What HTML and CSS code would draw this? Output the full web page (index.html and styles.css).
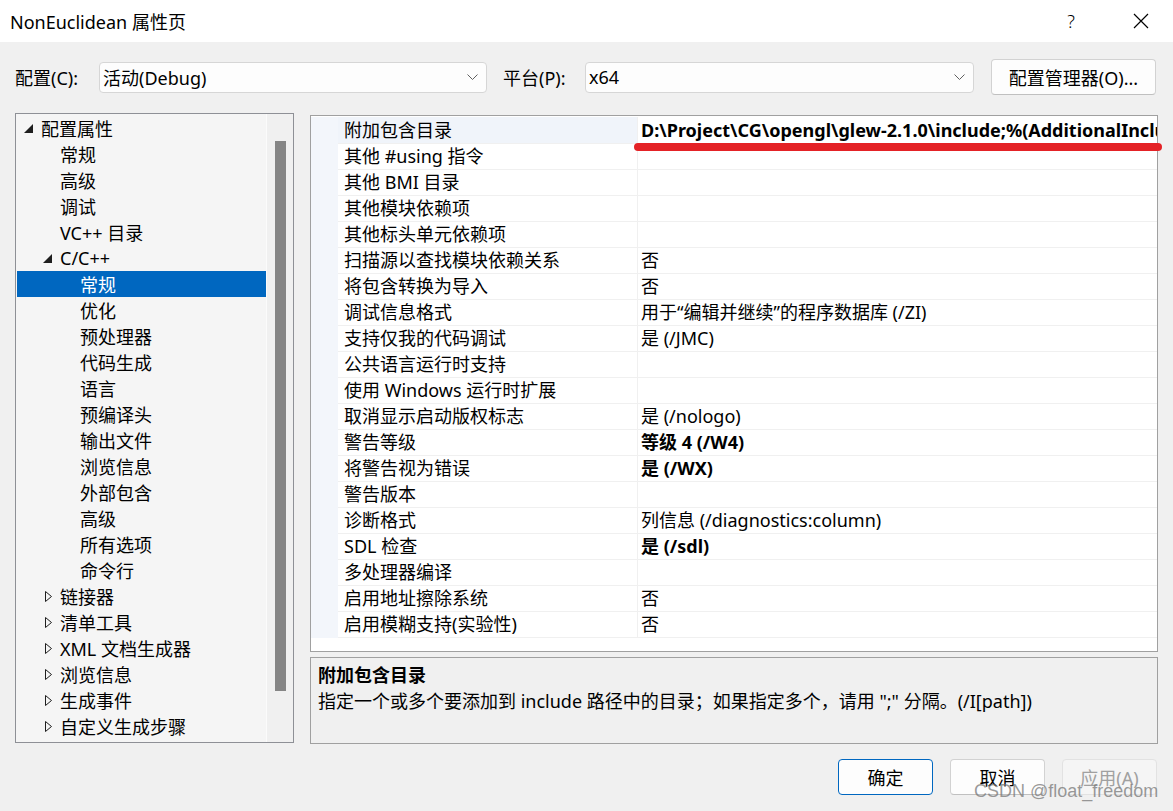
FILE: index.html
```html
<!DOCTYPE html>
<html lang="zh-CN">
<head>
    <meta charset="UTF-8">
    <title>NonEuclidean 属性页</title>
    <link rel="stylesheet" href="styles.css">
</head>
<body>
<div class="dialog">
    <div class="titlebar">
        <span class="title">NonEuclidean 属性页</span>
        <span class="caption-btn help">?</span>
        <span class="caption-btn close">
            <svg width="16" height="16" viewBox="0 0 16 16"><path d="M1 1L15 15M15 1L1 15" stroke="#000" stroke-width="1.2"/></svg>
        </span>
    </div>

    <div class="config-row">
        <label class="cfg-label">配置(C):</label>
        <div class="combo combo-config">
            <span>活动(Debug)</span>
            <svg width="11" height="6" viewBox="0 0 11 6"><path d="M0.5 0.5L5.5 5.5L10.5 0.5" fill="none" stroke="#606060"/></svg>
        </div>
        <label class="cfg-label platform-label">平台(P):</label>
        <div class="combo combo-platform">
            <span>x64</span>
            <svg width="11" height="6" viewBox="0 0 11 6"><path d="M0.5 0.5L5.5 5.5L10.5 0.5" fill="none" stroke="#606060"/></svg>
        </div>
        <button class="btn btn-manager">配置管理器(O)...</button>
    </div>

    <div class="main">
        <div class="tree">
            <ul class="tree-list">
                <li class="lvl1"><span class="twisty"><svg width="9" height="9" viewBox="0 0 9 9"><path d="M9 0V9H0Z" fill="#1e1e1e"/></svg></span>配置属性</li>
                <li class="lvl2"><span class="twisty"></span>常规</li>
                <li class="lvl2"><span class="twisty"></span>高级</li>
                <li class="lvl2"><span class="twisty"></span>调试</li>
                <li class="lvl2"><span class="twisty"></span>VC++ 目录</li>
                <li class="lvl2"><span class="twisty"><svg width="9" height="9" viewBox="0 0 9 9"><path d="M9 0V9H0Z" fill="#1e1e1e"/></svg></span>C/C++</li>
                <li class="lvl3 selected"><span class="twisty"></span>常规</li>
                <li class="lvl3"><span class="twisty"></span>优化</li>
                <li class="lvl3"><span class="twisty"></span>预处理器</li>
                <li class="lvl3"><span class="twisty"></span>代码生成</li>
                <li class="lvl3"><span class="twisty"></span>语言</li>
                <li class="lvl3"><span class="twisty"></span>预编译头</li>
                <li class="lvl3"><span class="twisty"></span>输出文件</li>
                <li class="lvl3"><span class="twisty"></span>浏览信息</li>
                <li class="lvl3"><span class="twisty"></span>外部包含</li>
                <li class="lvl3"><span class="twisty"></span>高级</li>
                <li class="lvl3"><span class="twisty"></span>所有选项</li>
                <li class="lvl3"><span class="twisty"></span>命令行</li>
                <li class="lvl2"><span class="twisty"><svg width="9" height="11" viewBox="0 0 9 11"><path d="M2.5 0.5L8.5 5.5L2.5 10.5Z" fill="none" stroke="#1e1e1e"/></svg></span>链接器</li>
                <li class="lvl2"><span class="twisty"><svg width="9" height="11" viewBox="0 0 9 11"><path d="M2.5 0.5L8.5 5.5L2.5 10.5Z" fill="none" stroke="#1e1e1e"/></svg></span>清单工具</li>
                <li class="lvl2"><span class="twisty"><svg width="9" height="11" viewBox="0 0 9 11"><path d="M2.5 0.5L8.5 5.5L2.5 10.5Z" fill="none" stroke="#1e1e1e"/></svg></span>XML 文档生成器</li>
                <li class="lvl2"><span class="twisty"><svg width="9" height="11" viewBox="0 0 9 11"><path d="M2.5 0.5L8.5 5.5L2.5 10.5Z" fill="none" stroke="#1e1e1e"/></svg></span>浏览信息</li>
                <li class="lvl2"><span class="twisty"><svg width="9" height="11" viewBox="0 0 9 11"><path d="M2.5 0.5L8.5 5.5L2.5 10.5Z" fill="none" stroke="#1e1e1e"/></svg></span>生成事件</li>
                <li class="lvl2"><span class="twisty"><svg width="9" height="11" viewBox="0 0 9 11"><path d="M2.5 0.5L8.5 5.5L2.5 10.5Z" fill="none" stroke="#1e1e1e"/></svg></span>自定义生成步骤</li>
            </ul>
            <div class="scroll-track"><div class="thumb"></div></div>
        </div>

        <div class="right">
            <div class="grid">
                <div class="prop-row current"><span class="gutter"></span><span class="name">附加包含目录</span><span class="value bold">D:\Project\CG\opengl\glew-2.1.0\include;%(AdditionalIncludeDirectories)</span></div>
                <div class="prop-row"><span class="gutter"></span><span class="name">其他 #using 指令</span><span class="value"></span></div>
                <div class="prop-row"><span class="gutter"></span><span class="name">其他 BMI 目录</span><span class="value"></span></div>
                <div class="prop-row"><span class="gutter"></span><span class="name">其他模块依赖项</span><span class="value"></span></div>
                <div class="prop-row"><span class="gutter"></span><span class="name">其他标头单元依赖项</span><span class="value"></span></div>
                <div class="prop-row"><span class="gutter"></span><span class="name">扫描源以查找模块依赖关系</span><span class="value">否</span></div>
                <div class="prop-row"><span class="gutter"></span><span class="name">将包含转换为导入</span><span class="value">否</span></div>
                <div class="prop-row"><span class="gutter"></span><span class="name">调试信息格式</span><span class="value">用于“编辑并继续”的程序数据库 (/ZI)</span></div>
                <div class="prop-row"><span class="gutter"></span><span class="name">支持仅我的代码调试</span><span class="value">是 (/JMC)</span></div>
                <div class="prop-row"><span class="gutter"></span><span class="name">公共语言运行时支持</span><span class="value"></span></div>
                <div class="prop-row"><span class="gutter"></span><span class="name">使用 Windows 运行时扩展</span><span class="value"></span></div>
                <div class="prop-row"><span class="gutter"></span><span class="name">取消显示启动版权标志</span><span class="value">是 (/nologo)</span></div>
                <div class="prop-row"><span class="gutter"></span><span class="name">警告等级</span><span class="value bold">等级 4 (/W4)</span></div>
                <div class="prop-row"><span class="gutter"></span><span class="name">将警告视为错误</span><span class="value bold">是 (/WX)</span></div>
                <div class="prop-row"><span class="gutter"></span><span class="name">警告版本</span><span class="value"></span></div>
                <div class="prop-row"><span class="gutter"></span><span class="name">诊断格式</span><span class="value">列信息 (/diagnostics:column)</span></div>
                <div class="prop-row"><span class="gutter"></span><span class="name">SDL 检查</span><span class="value bold">是 (/sdl)</span></div>
                <div class="prop-row"><span class="gutter"></span><span class="name">多处理器编译</span><span class="value"></span></div>
                <div class="prop-row"><span class="gutter"></span><span class="name">启用地址擦除系统</span><span class="value">否</span></div>
                <div class="prop-row"><span class="gutter"></span><span class="name">启用模糊支持(实验性)</span><span class="value">否</span></div>
                <div class="mark"></div>
            </div>
            <div class="desc">
                <div class="desc-title">附加包含目录</div>
                <div class="desc-text">指定一个或多个要添加到 include 路径中的目录；如果指定多个，请用 ";" 分隔。(/I[path])</div>
            </div>
        </div>
    </div>

    <div class="footer">
        <button class="btn btn-default">确定</button>
        <button class="btn">取消</button>
        <button class="btn" disabled>应用(A)</button>
    </div>

    <div class="watermark">CSDN @float_freedom</div>
</div>
</body>
</html>
```

FILE: styles.css
```css
* {
    box-sizing: border-box;
}

body {
    margin: 0;
    background: #f0f0f0;
    font-family: "Noto Sans", "Noto Sans CJK SC", sans-serif;
    font-size: 18px;
    color: #000;
}

.dialog {
    position: relative;
    width: 1173px;
    height: 811px;
    overflow: hidden;
}

/* title bar */
.titlebar {
    height: 42px;
    background: #fff;
    display: flex;
    align-items: center;
    padding-left: 10px;
}

.title {
    flex: 1;
}

.caption-btn {
    height: 42px;
    display: flex;
    align-items: center;
    justify-content: center;
}

.help {
    width: 74px;
    font-weight: 300;
}

.close {
    width: 65px;
}

/* configuration row */
.config-row {
    display: flex;
    align-items: center;
    height: 36px;
    margin-top: 17px;
    padding-left: 15px;
}

.cfg-label {
    width: 84px;
}

.platform-label {
    margin-left: 16px;
    width: 82px;
}

.combo {
    height: 31px;
    background: #fdfdfd;
    border: 1px solid #d6d6d6;
    border-radius: 4px;
    display: flex;
    align-items: center;
    justify-content: space-between;
    padding: 0 8px 0 3px;
}

.combo-config {
    width: 388px;
}

.combo-platform {
    width: 389px;
}

.btn {
    height: 36px;
    width: 95px;
    background: #fdfdfd;
    border: 1px solid #d2d2d2;
    border-bottom-color: #c0c0c0;
    border-radius: 4px;
    font-family: inherit;
    font-size: 18px;
    color: #000;
    padding: 0;
}

.btn-manager {
    margin-left: 17px;
    width: 165px;
}

.btn-default {
    border-color: #0067c0;
}

.btn:disabled {
    background: #f5f5f5;
    border-color: #e2e2e2;
    color: #a0a0a0;
}

/* main area */
.main {
    display: flex;
    gap: 16px;
    margin-top: 18px;
    padding-left: 15px;
}

.tree {
    width: 279px;
    height: 630px;
    border: 1px solid #8e9096;
    background: #f5f5f5;
    display: flex;
    padding: 1px 0 0 1px;
}

.tree-list {
    list-style: none;
    margin: 0;
    padding: 0;
    width: 249px;
}

.tree-list li {
    height: 26px;
    display: flex;
    align-items: center;
    white-space: nowrap;
}

.tree-list li.selected {
    background: #0067c0;
    color: #fff;
}

.twisty {
    width: 17px;
    flex: none;
    display: flex;
    align-items: center;
}

.lvl1 {
    padding-left: 7px;
}

.lvl2 {
    padding-left: 26px;
}

.lvl3 {
    padding-left: 46px;
}

.scroll-track {
    width: 27px;
    margin-top: -1px;
    border-left: 1px solid #fbfbfb;
    background: #f0f0f0;
    display: flex;
    justify-content: center;
}

.thumb {
    width: 11px;
    height: 550px;
    margin-top: 27px;
    background: #858585;
}

.right {
    width: 848px;
    margin-top: 2px;
    display: flex;
    flex-direction: column;
    gap: 5px;
}

.grid {
    position: relative;
    height: 537px;
    border: 1px solid #a0a0a0;
    background: #fff;
    padding-top: 1px;
}

.prop-row {
    display: grid;
    grid-template-columns: 27px 300px 1fr;
    height: 26px;
    line-height: 26px;
}

.gutter {
    background: #f3f6fb;
}

.name {
    padding-left: 6px;
    border-bottom: 1px solid #f0f0f0;
    border-right: 1px solid #f0f0f0;
    white-space: nowrap;
}

.value {
    padding-left: 3px;
    border-bottom: 1px solid #f0f0f0;
    white-space: nowrap;
    overflow: hidden;
}

.prop-row.current .name {
    background: #f0f4fa;
}

.bold {
    font-weight: 700;
}

/* red annotation under the include path */
.mark {
    position: absolute;
    left: 323px;
    top: 27px;
    width: 528px;
    height: 8px;
    border-radius: 4px;
    background: #e42226;
}

.desc {
    height: 87px;
    border: 1px solid #a0a0a0;
    background: #f0f0f0;
    padding: 4px 7px;
    line-height: 26px;
}

.desc-title {
    font-weight: 700;
}

.footer {
    display: flex;
    justify-content: flex-end;
    gap: 17px;
    margin-top: 15px;
    padding-right: 16px;
}

.watermark {
    position: absolute;
    left: 974px;
    top: 781px;
    font-family: "Liberation Sans", sans-serif;
    font-size: 18px;
    color: rgba(120, 120, 120, 0.75);
    white-space: nowrap;
}
```
